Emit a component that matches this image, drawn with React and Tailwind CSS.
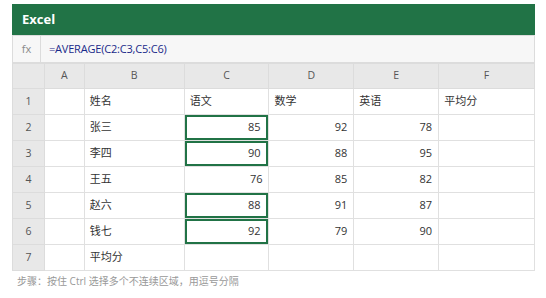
import React from "react";

const cols = ["A", "B", "C", "D", "E", "F"];
const widths = ["w-[40px]", "w-[100px]", "w-[85px]", "w-[85px]", "w-[85px]", "w-[96px]"];

const rows = [
  ["", "姓名", "语文", "数学", "英语", "平均分"],
  ["", "张三", "85", "92", "78", ""],
  ["", "李四", "90", "88", "95", ""],
  ["", "王五", "76", "85", "82", ""],
  ["", "赵六", "88", "91", "87", ""],
  ["", "钱七", "92", "79", "90", ""],
  ["", "平均分", "", "", "", ""],
];

const selected = new Set(["2-2", "3-2", "5-2", "6-2"]);

export default function App() {
  return (
    <div
      className="w-[546px] h-[298px] bg-white pt-[4px] px-[12px]"
      style={{ fontFamily: '"Open Sans", "Noto Sans CJK SC", sans-serif' }}
    >
      <div className="w-[523px]">
        <div className="h-[31px] bg-[#217346] flex items-center pl-[10px] text-white font-bold text-[13px]">
          Excel
        </div>
        <div className="h-[28px] bg-[#f7f7f7] border border-[#dcdcdc] flex items-center">
          <div className="w-[28px] h-full flex items-center justify-center text-[11px] text-[#8a8a8a] border-r border-[#dcdcdc]">
            fx
          </div>
          <div className="pl-[8px] text-[11px] tracking-[-0.2px] text-[#1a2a8a]">
            =AVERAGE(C2:C3,C5:C6)
          </div>
        </div>
        <table className="border-collapse table-fixed text-[11px] text-[#333]">
          <thead>
            <tr className="h-[25px]">
              <th className="w-[32px] bg-[#e8e8e8] border border-[#dcdcdc] font-normal"></th>
              {cols.map((c, i) => (
                <th
                  key={c}
                  className={`${widths[i]} bg-[#e8e8e8] border border-[#dcdcdc] font-normal text-[10.5px] text-[#555]`}
                >
                  {c}
                </th>
              ))}
            </tr>
          </thead>
          <tbody>
            {rows.map((r, ri) => (
              <tr key={ri} className="h-[26px]">
                <td className="bg-[#e8e8e8] border border-[#dcdcdc] text-center text-[10.5px] text-[#555]">
                  {ri + 1}
                </td>
                {r.map((v, ci) => {
                  const isNum = v !== "" && !isNaN(Number(v));
                  const sel = selected.has(`${ri + 1}-${ci}`);
                  return (
                    <td
                      key={ci}
                      className={`border border-[#e0e0e0] p-0 ${isNum ? "text-right" : "text-left"}`}
                    >
                      <div
                        className={`h-[25px] flex items-center ${isNum ? "justify-end pr-[6px]" : "pl-[5px]"} ${
                          sel ? "border-2 border-[#217346] pr-[5px]" : ""
                        }`}
                      >
                        {v}
                      </div>
                    </td>
                  );
                })}
              </tr>
            ))}
          </tbody>
        </table>
        <div className="pt-[3px] pl-[5px] text-[10px] text-[#999]">
          步骤：按住 Ctrl 选择多个不连续区域，用逗号分隔
        </div>
      </div>
    </div>
  );
}
